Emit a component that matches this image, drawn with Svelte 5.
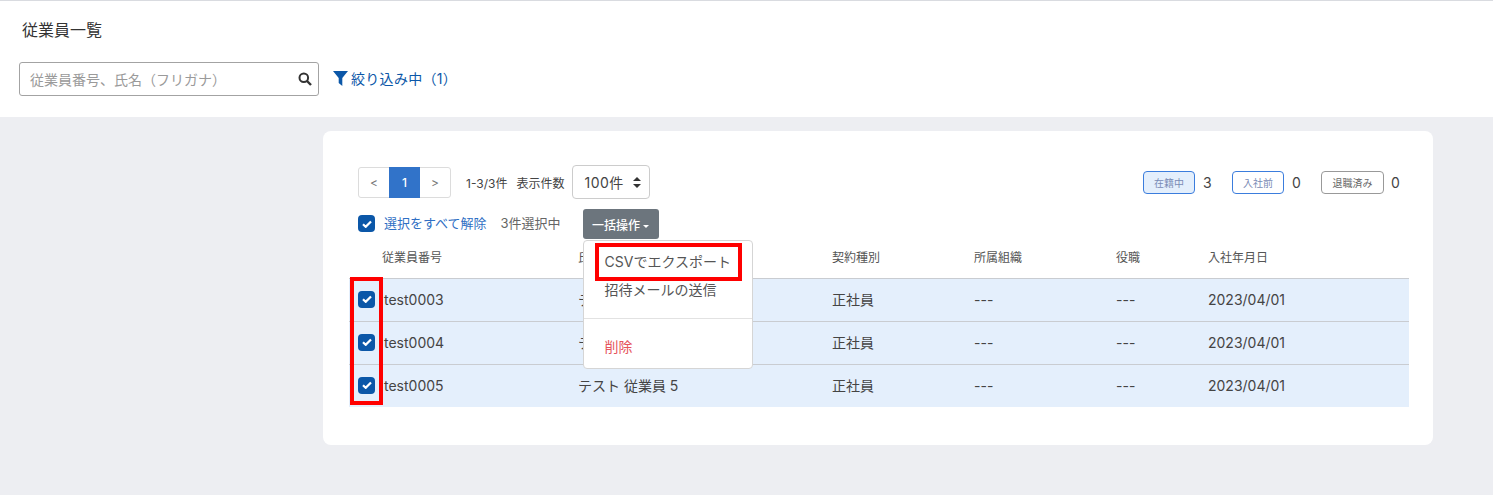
<script>
  const rows = [
    { id: "test0003", name: "テスト 従業員 3" },
    { id: "test0004", name: "テスト 従業員 4" },
    { id: "test0005", name: "テスト 従業員 5" },
  ];
  const statuses = [
    { label: "在籍中", count: 3, cls: "active" },
    { label: "入社前", count: 0, cls: "before" },
    { label: "退職済み", count: 0, cls: "left" },
  ];
</script>

{#snippet check()}
  <span class="check">
    <svg width="10" height="8" viewBox="0 0 10 8"><path d="M1 4.2 3.7 6.8 9 1.4" fill="none" stroke="#fff" stroke-width="2.2" /></svg>
  </span>
{/snippet}

<div class="page">
  <header class="top">
    <h1>従業員一覧</h1>
    <div class="filters">
      <div class="search">
        <span class="ph">従業員番号、氏名（フリガナ）</span>
        <span class="sbtn">
          <svg width="14" height="14" viewBox="0 0 14 14"><circle cx="5.8" cy="5.8" r="4.3" fill="none" stroke="#333" stroke-width="2" /><path d="M9 9l4 4" stroke="#333" stroke-width="2.4" /></svg>
        </span>
      </div>
      <a class="filter" href="#/">
        <svg width="15" height="16" viewBox="0 0 15 16"><path d="M0 1h15L9.3 8v8L5.7 13V8z" fill="#0b57a8" /></svg>
        <span>絞り込み中（1）</span>
      </a>
    </div>
  </header>

  <main>
    <section class="card">
      <div class="bar">
        <div class="pager">
          <span>&lt;</span><span class="cur">1</span><span>&gt;</span>
        </div>
        <span class="info">1-3/3件</span>
        <span class="info lbl">表示件数</span>
        <span class="select">100件
          <svg width="8" height="11" viewBox="0 0 8 11"><path d="M4 0 8 4H0zM4 11 0 7h8z" fill="#333" /></svg>
        </span>
        <div class="status">
          {#each statuses as s}
            <span class="badge {s.cls}">{s.label}</span><span class="num">{s.count}</span>
          {/each}
        </div>
      </div>

      <div class="bulk">
        {@render check()}
        <a class="clear" href="#/">選択をすべて解除</a>
        <span class="sel">3件選択中</span>
        <div class="drop">
          <button>一括操作<i></i></button>
          <div class="menu">
            <div class="item first">CSVでエクスポート</div>
            <div class="item second">招待メールの送信</div>
            <hr />
            <div class="item del">削除</div>
            <div class="mark"></div>
          </div>
        </div>
      </div>

      <div class="table">
        <div class="tr th">
          <span></span><span class="idh">従業員番号</span><span>氏名</span><span>契約種別</span><span>所属組織</span><span>役職</span><span>入社年月日</span>
        </div>
        {#each rows as r}
          <div class="tr td">
            <span class="cb">{@render check()}</span>
            <span>{r.id}</span><span>{r.name}</span><span>正社員</span><span>---</span><span>---</span><span>2023/04/01</span>
          </div>
        {/each}
        <div class="mark col"></div>
      </div>
    </section>
  </main>
</div>

<style>
  :global(body) {
    margin: 0;
    background: #edeef2;
  }
  .page {
    height: 495px;
    overflow: hidden;
    font-family: Inter, "Noto Sans CJK JP", sans-serif;
    color: #444;
  }
  .top {
    background: #fff;
    border-top: 1px solid #d9dbe0;
    height: 117px;
    box-sizing: border-box;
    padding: 19px 19px 0;
  }
  h1 {
    margin: 0 0 0 3px;
    font-size: 16px;
    line-height: 20px;
    font-weight: 400;
    color: #333;
  }
  .filters {
    display: flex;
    align-items: center;
    margin-top: 22px;
  }
  .search {
    width: 300px;
    height: 34px;
    box-sizing: border-box;
    border: 1px solid #a3a3a3;
    border-radius: 3px;
    display: flex;
    align-items: center;
    justify-content: space-between;
    font-size: 14px;
  }
  .ph {
    color: #9a9a9a;
    padding-left: 10px;
  }
  .sbtn {
    width: 26px;
    height: 100%;
    display: flex;
    align-items: center;
    justify-content: center;
  }
  .filter {
    display: flex;
    align-items: center;
    gap: 3px;
    margin-left: 14px;
    margin-top: -2px;
    font-size: 14px;
    letter-spacing: 0.3px;
    color: #0b57a8;
    text-decoration: none;
  }
  main {
    padding: 14px 60px 0 323px;
  }
  .card {
    background: #fff;
    border-radius: 8px;
    height: 314px;
    box-sizing: border-box;
    padding: 34px 24px 0 26px;
  }
  .bar {
    display: flex;
    align-items: center;
    height: 34px;
    padding-left: 9px;
    padding-right: 10px;
  }
  .pager {
    display: flex;
    height: 31px;
    box-sizing: border-box;
    border: 1px solid #dcdcdc;
    border-radius: 3px;
    font-size: 12px;
    color: #777;
  }
  .pager span {
    width: 30px;
    display: flex;
    align-items: center;
    justify-content: center;
  }
  .pager .cur {
    width: 31px;
    margin: -1px 0;
    background: #3173c9;
    color: #fff;
    font-weight: 500;
  }
  .info {
    font-size: 12px;
    margin-left: 15px;
  }
  .lbl {
    margin-left: 9px;
  }
  .select {
    display: flex;
    align-items: center;
    justify-content: space-between;
    width: 78px;
    height: 34px;
    box-sizing: border-box;
    margin-left: 8px;
    padding: 0 8px 0 11px;
    border: 1px solid #ccc;
    border-radius: 4px;
    font-size: 14px;
    letter-spacing: 0.5px;
  }
  .status {
    margin-left: auto;
    display: flex;
    align-items: center;
    font-size: 14px;
  }
  .badge {
    width: 52px;
    height: 23px;
    box-sizing: border-box;
    display: flex;
    align-items: center;
    justify-content: center;
    border: 1px solid #3b7ddd;
    border-radius: 4px;
    font-size: 10px;
    color: #7a8bb5;
  }
  .badge.active {
    background: #e4effc;
  }
  .badge.left {
    width: 63px;
    border-color: #999;
    color: #666;
  }
  .num {
    width: 37px;
    padding-left: 8px;
    box-sizing: border-box;
  }
  .num:last-child {
    width: 15px;
    padding-left: 7px;
  }
  .bulk {
    display: flex;
    align-items: center;
    height: 30px;
    margin-top: 10px;
    padding-left: 9px;
    font-size: 13px;
  }
  .bulk > .check {
    margin-top: -1px;
  }
  .check {
    width: 17px;
    height: 17px;
    border-radius: 4px;
    background: #0b57a8;
    display: flex;
    align-items: center;
    justify-content: center;
  }
  .clear {
    margin-left: 9px;
    margin-top: -3px;
    color: #2f6fc4;
    text-decoration: none;
  }
  .sel {
    margin-left: 14px;
    margin-top: -3px;
    color: #666;
  }
  .drop {
    position: relative;
    margin-left: 22px;
  }
  button {
    width: 76px;
    height: 30px;
    border: 0;
    border-radius: 3px;
    background: #6c757d;
    color: #fff;
    font: inherit;
    font-size: 12px;
    font-weight: 500;
    padding: 0;
  }
  button i {
    display: inline-block;
    margin-left: 3px;
    vertical-align: 2px;
    border: 3px solid transparent;
    border-top-color: #fff;
    border-bottom: 0;
  }
  .menu {
    position: absolute;
    z-index: 2;
    left: 0;
    top: 31px;
    width: 170px;
    height: 129px;
    box-sizing: border-box;
    background: #fff;
    border: 1px solid #d5d5d5;
    border-radius: 4px;
    font-size: 14px;
    color: #555;
  }
  .item {
    position: absolute;
    left: 21px;
  }
  .first { top: 10px; }
  .second { top: 38px; }
  .del { top: 95px; color: #e6545c; }
  hr {
    position: absolute;
    left: 0;
    right: 0;
    top: 77px;
    margin: 0;
    border: 0;
    border-top: 1px solid #e2e2e2;
  }
  .mark {
    position: absolute;
    left: 11px;
    top: 2px;
    width: 147px;
    height: 38px;
    box-sizing: border-box;
    border: 4px solid #f00;
    pointer-events: none;
  }
  .table {
    position: relative;
    margin-top: -3px;
    font-size: 14px;
  }
  .tr {
    display: grid;
    grid-template-columns: 35px 194px 254px 142px 142px 92px 1fr;
    align-items: center;
  }
  .th {
    height: 42px;
    box-sizing: border-box;
    padding-bottom: 2px;
    font-size: 12px;
    color: #555;
  }
  .idh {
    margin-left: -2px;
  }
  .td {
    height: 43px;
    box-sizing: border-box;
    padding-bottom: 2px;
    background: #e4effc;
    border-top: 1px solid #c9ccd1;
  }
  .cb {
    padding-left: 9px;
  }
  .mark.col {
    left: 1px;
    top: 41px;
    width: 33px;
    height: 128px;
  }
</style>
